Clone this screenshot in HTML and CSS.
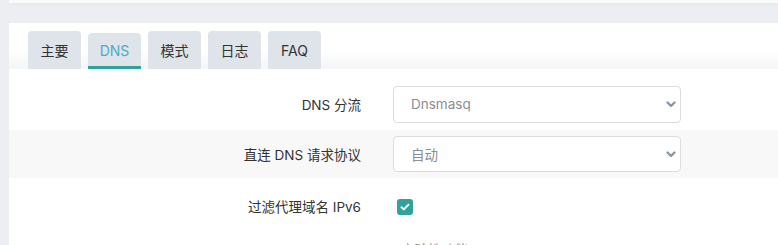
FILE: index.html
```html
<!DOCTYPE html>
<html lang="zh">
<head>
<meta charset="utf-8">
<link rel="stylesheet" href="styles.css">
</head>
<body>
<div class="topcard"></div>
<div class="card">
  <div class="tabbar">
    <div class="tab">主要</div>
    <div class="tab active">DNS</div>
    <div class="tab">模式</div>
    <div class="tab">日志</div>
    <div class="tab">FAQ</div>
  </div>
  <div class="content">
    <div class="row">
      <div class="label">DNS 分流</div>
      <div class="field">
        <div class="select"><span>Dnsmasq</span>
          <svg class="chev" width="12" height="8" viewBox="0 0 12 8"><path d="M2.5 2.5l3.5 3.5 3.5-3.5" fill="none" stroke="#8a96a6" stroke-width="2.4" stroke-linecap="round" stroke-linejoin="round"/></svg>
        </div>
      </div>
    </div>
    <div class="row alt">
      <div class="label">直连 DNS 请求协议</div>
      <div class="field">
        <div class="select"><span>自动</span>
          <svg class="chev" width="12" height="8" viewBox="0 0 12 8"><path d="M2.5 2.5l3.5 3.5 3.5-3.5" fill="none" stroke="#8a96a6" stroke-width="2.4" stroke-linecap="round" stroke-linejoin="round"/></svg>
        </div>
      </div>
    </div>
    <div class="row check-row">
      <div class="label">过滤代理域名 IPv6</div>
      <div class="field col">
        <div class="checkbox">
          <svg width="10" height="8" viewBox="0 0 10 8"><path d="M1.5 4.2l2.3 2.2L8.5 1.6" fill="none" stroke="#fff" stroke-width="2" stroke-linecap="round" stroke-linejoin="round"/></svg>
        </div>
        <div class="desc">实验性功能</div>
      </div>
    </div>
  </div>
</div>
</body>
</html>
```

FILE: styles.css
```css
html, body {
  margin: 0;
  padding: 0;
}
body {
  background: #eceef1;
  font-family: Inter, "Noto Sans", "Noto Sans CJK SC", sans-serif;
  font-size: 13.5px;
  color: #333;
  height: 245px;
  overflow: hidden;
}
.topcard {
  margin-left: 9px;
  height: 3px;
  background: #fafafa;
  box-shadow: 0 1px 4px rgba(0,0,0,0.05);
}
.card {
  margin-top: 20px;
  margin-left: 9px;
  background: #fff;
  height: 300px;
}
.tabbar {
  display: flex;
  align-items: flex-end;
  gap: 7px;
  padding: 8px 0 0 19px;
  height: 38px;
  background: linear-gradient(#fff 0%, #fff 60%, #f4f5f7 100%);
}
.tab {
  width: 53px;
  height: 38px;
  display: flex;
  align-items: center;
  justify-content: center;
  background: #dfe3ea;
  border-radius: 4px 4px 0 0;
  color: #333;
  font-size: 14px;
  box-sizing: border-box;
}
.tab.active {
  height: 36px;
  color: #4eaacb;
  border-bottom: 3px solid #2fa39b;
  padding-top: 2px;
}
.content {
  padding-top: 11px;
}
.row {
  display: flex;
  align-items: center;
  height: 48px;
  margin-bottom: 2px;
}
.row.alt {
  background: #f8f8f8;
}
.label {
  width: 352px;
  text-align: right;
  box-sizing: border-box;
  flex: none;
}
.field {
  margin-left: 32px;
}
.select {
  width: 288px;
  height: 37px;
  box-sizing: border-box;
  border: 1px solid #dcdcdc;
  border-radius: 4px;
  background: #fff;
  display: flex;
  align-items: center;
  justify-content: space-between;
  padding: 0 3px 0 17px;
  color: #8a8d94;
  font-size: 13.5px;
}
.row.alt .select {
  height: 36px;
}
.check-row {
  align-items: flex-start;
  height: auto;
  padding-top: 19px;
}
.check-row .label {
  line-height: 16px;
}
.field.col {
  display: flex;
  flex-direction: column;
  margin-left: 36px;
}
.checkbox {
  width: 16px;
  height: 16px;
  border-radius: 3px;
  background: #2fa39b;
  display: flex;
  align-items: center;
  justify-content: center;
}
.desc {
  margin-top: 24px;
  margin-left: 4px;
  color: #999;
  font-size: 13.5px;
}
```
